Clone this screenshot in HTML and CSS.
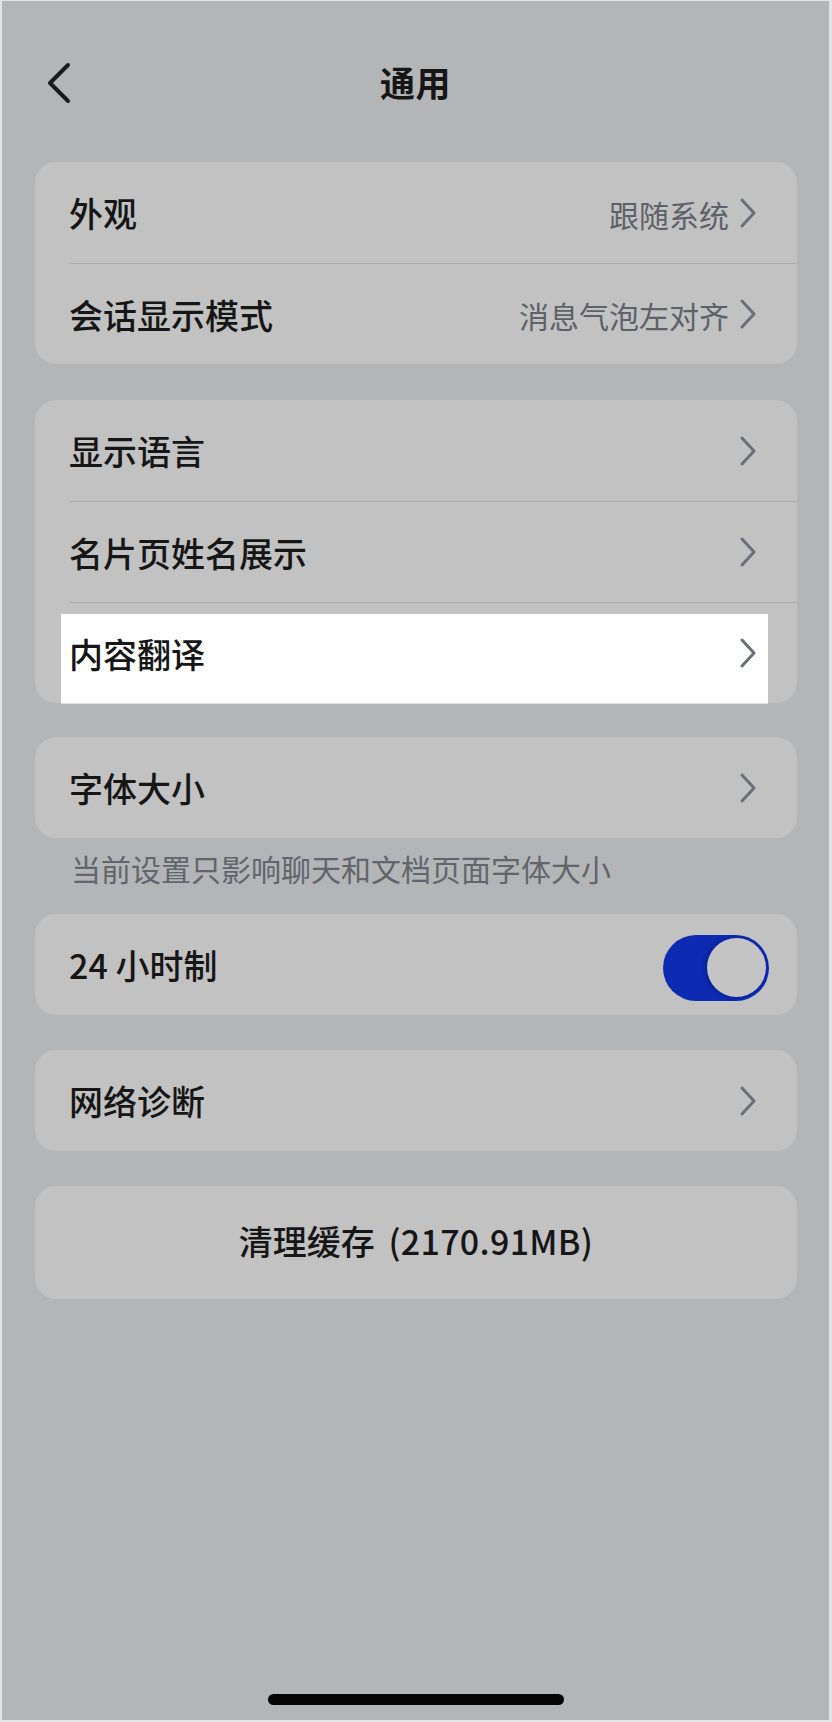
FILE: index.html
```html
<!DOCTYPE html>
<html lang="zh-CN">
<head>
<meta charset="utf-8">
<title>通用</title>
<link rel="stylesheet" href="styles.css">
</head>
<body>
<div class="screen">
  <header class="nav">
    <div class="nav-left">
      <svg class="back" width="26" height="44" viewBox="0 0 26 44"><path d="M22 4 L4 22 L22 40" fill="none" stroke="#1b1b1c" stroke-width="4" stroke-linecap="round" stroke-linejoin="round"/></svg>
    </div>
    <h1 class="title">通用</h1>
    <div class="nav-right"></div>
  </header>

  <main class="list">
    <section class="card">
      <div class="row">
        <span class="label">外观</span>
        <span class="value">跟随系统</span>
        <svg class="chev" width="18" height="32" viewBox="0 0 18 32"><path d="M3 3 L15 16 L3 29" fill="none" stroke="#6b6f76" stroke-width="3" stroke-linecap="round" stroke-linejoin="round"/></svg>
      </div>
      <div class="row">
        <span class="label">会话显示模式</span>
        <span class="value">消息气泡左对齐</span>
        <svg class="chev" width="18" height="32" viewBox="0 0 18 32"><path d="M3 3 L15 16 L3 29" fill="none" stroke="#6b6f76" stroke-width="3" stroke-linecap="round" stroke-linejoin="round"/></svg>
      </div>
    </section>

    <section class="card">
      <div class="row">
        <span class="label">显示语言</span>
        <svg class="chev" width="18" height="32" viewBox="0 0 18 32"><path d="M3 3 L15 16 L3 29" fill="none" stroke="#6b6f76" stroke-width="3" stroke-linecap="round" stroke-linejoin="round"/></svg>
      </div>
      <div class="row">
        <span class="label">名片页姓名展示</span>
        <svg class="chev" width="18" height="32" viewBox="0 0 18 32"><path d="M3 3 L15 16 L3 29" fill="none" stroke="#6b6f76" stroke-width="3" stroke-linecap="round" stroke-linejoin="round"/></svg>
      </div>
      <div class="row row-highlight">
        <span class="highlight"></span>
        <span class="label">内容翻译</span>
        <svg class="chev" width="18" height="32" viewBox="0 0 18 32"><path d="M3 3 L15 16 L3 29" fill="none" stroke="#6b6f76" stroke-width="3" stroke-linecap="round" stroke-linejoin="round"/></svg>
      </div>
    </section>

    <div class="group">
      <section class="card">
        <div class="row">
          <span class="label">字体大小</span>
          <svg class="chev" width="18" height="32" viewBox="0 0 18 32"><path d="M3 3 L15 16 L3 29" fill="none" stroke="#6b6f76" stroke-width="3" stroke-linecap="round" stroke-linejoin="round"/></svg>
        </div>
      </section>
      <p class="caption">当前设置只影响聊天和文档页面字体大小</p>
    </div>

    <section class="card">
      <div class="row row-switch">
        <span class="label">24 小时制</span>
        <span class="switch on"><span class="knob"></span></span>
      </div>
    </section>

    <section class="card">
      <div class="row">
        <span class="label">网络诊断</span>
        <svg class="chev" width="18" height="32" viewBox="0 0 18 32"><path d="M3 3 L15 16 L3 29" fill="none" stroke="#6b6f76" stroke-width="3" stroke-linecap="round" stroke-linejoin="round"/></svg>
      </div>
    </section>

    <section class="card card-action">
      <span class="action">清理缓存 <span class="num">(2170.91MB)</span></span>
    </section>
  </main>

  <div class="home-indicator"></div>
</div>
</body>
</html>
```

FILE: styles.css
```css
html {
  background: #e4e4e5;
}

body {
  margin: 0;
  font-family: "Noto Sans CJK SC", "Noto Sans", "Liberation Sans", sans-serif;
}

.screen {
  margin: 1px 3px 2px 2px;
  height: 1719px;
  background: #b4b5b7;
  display: flex;
  flex-direction: column;
  overflow: hidden;
}

.nav {
  height: 161px;
  flex: none;
  display: grid;
  grid-template-columns: 1fr auto 1fr;
  align-items: center;
}

.nav-left {
  display: flex;
  align-items: center;
  padding-left: 44px;
}

.back {
  display: block;
  margin-top: 2px;
}

.title {
  margin: 0;
  font-size: 35px;
  font-weight: 700;
  color: #161617;
  line-height: 44px;
  letter-spacing: 0.5px;
}

.list {
  display: flex;
  flex-direction: column;
  gap: 35px;
  padding: 0 32px 0 33px;
}

.list > .card:first-child {
  margin-bottom: 1px;
}

.card {
  background: #c2c2c2;
  border-radius: 21px;
  position: relative;
}

.row {
  box-sizing: border-box;
  height: 101px;
  margin-left: 34px;
  padding-right: 40px;
  display: flex;
  align-items: center;
  position: relative;
}

.row + .row {
  border-top: 1px solid #abacae;
}

.label {
  flex: 1;
  font-size: 34px;
  font-weight: 500;
  color: #161617;
  line-height: 44px;
  padding-top: 1px;
  position: relative;
  z-index: 1;
}

.value {
  font-size: 30px;
  color: #5e6168;
  line-height: 40px;
  padding-top: 2px;
  margin-right: 10px;
}

.chev {
  display: block;
  flex: none;
  position: relative;
  z-index: 1;
}

.highlight {
  position: absolute;
  left: -8px;
  right: 29px;
  top: 11px;
  bottom: -1px;
  background: #ffffff;
  border-bottom: 1px solid #dedfe0;
  z-index: 0;
}

.group {
  display: flex;
  flex-direction: column;
  margin-top: -1px;
}

.caption {
  margin: 10px 0 -9px 36px;
  font-size: 30px;
  line-height: 40px;
  color: #62656b;
}

.row-switch {
  padding-right: 28px;
}

.switch {
  box-sizing: border-box;
  width: 106px;
  height: 66px;
  border-radius: 33px;
  background: #0c2ab2;
  display: flex;
  align-items: center;
  justify-content: flex-end;
  padding: 3px;
  margin-top: 6px;
}

.knob {
  width: 59px;
  height: 59px;
  border-radius: 50%;
  background: #c4c4c5;
  box-shadow: -2px 0 4px rgba(0, 0, 30, 0.25);
}

.card-action {
  height: 113px;
  display: flex;
  align-items: center;
  justify-content: center;
}

.action {
  font-size: 34px;
  font-weight: 500;
  color: #161617;
  line-height: 44px;
  padding-bottom: 4px;
  word-spacing: 6px;
}

.num {
  letter-spacing: 0.3px;
}

.home-indicator {
  margin: auto auto 15px;
  width: 296px;
  height: 11px;
  border-radius: 6px;
  background: #050505;
}
```
